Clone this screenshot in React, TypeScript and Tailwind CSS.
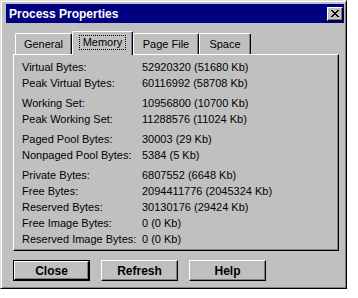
const rowGroups: [string, string][][] = [
  [
    ["Virtual Bytes:", "52920320 (51680 Kb)"],
    ["Peak Virtual Bytes:", "60116992 (58708 Kb)"],
  ],
  [
    ["Working Set:", "10956800 (10700 Kb)"],
    ["Peak Working Set:", "11288576 (11024 Kb)"],
  ],
  [
    ["Paged Pool Bytes:", "30003 (29 Kb)"],
    ["Nonpaged Pool Bytes:", "5384 (5 Kb)"],
  ],
  [
    ["Private Bytes:", "6807552 (6648 Kb)"],
    ["Free Bytes:", "2094411776 (2045324 Kb)"],
    ["Reserved Bytes:", "30130176 (29424 Kb)"],
    ["Free Image Bytes:", "0 (0 Kb)"],
    ["Reserved Image Bytes:", "0 (0 Kb)"],
  ],
];

const tabs = [
  { label: "General", width: "w-[57px]" },
  { label: "Memory", width: "w-[61px]", active: true },
  { label: "Page File", width: "w-[66px]" },
  { label: "Space", width: "w-[52px]" },
];

function CloseGlyph() {
  // 8x7 pixel cross, like the classic caption button
  const px: [number, number][] = [
    [0, 0], [1, 0], [6, 0], [7, 0],
    [1, 1], [2, 1], [5, 1], [6, 1],
    [2, 2], [3, 2], [4, 2], [5, 2],
    [3, 3], [4, 3],
    [2, 4], [3, 4], [4, 4], [5, 4],
    [1, 5], [2, 5], [5, 5], [6, 5],
    [0, 6], [1, 6], [6, 6], [7, 6],
  ];
  return (
    <svg width="8" height="7" viewBox="0 0 8 7" shapeRendering="crispEdges">
      {px.map(([x, y]) => (
        <rect key={`${x}-${y}`} x={x} y={y} width="1" height="1" fill="#000" />
      ))}
    </svg>
  );
}

function PushButton({ label, isDefault }: { label: string; isDefault?: boolean }) {
  return (
    <div
      className={
        isDefault
          ? "h-[21px] w-[77px] border border-black"
          : "h-[21px] w-[77px]"
      }
    >
      <div className="flex h-full w-full items-center justify-center border-t border-l border-t-white border-l-white border-r border-b border-r-black border-b-black bg-[#c0c0c0] text-[12px] font-bold text-black shadow-[inset_-1px_-1px_0_#808080]">
        {label}
      </div>
    </div>
  );
}

export default function App() {
  return (
    <div className="h-[298px] w-[358px] bg-white font-['Liberation_Sans',Arial,sans-serif]">
      <div className="flex h-[289px] w-[347px] flex-col border border-t-[#dfdfdf] border-l-[#dfdfdf] border-r-black border-b-black bg-[#c0c0c0] pl-[5px] pt-[3px] shadow-[inset_1px_1px_0_#fff,inset_-1px_-1px_0_#808080]">
        {/* caption */}
        <div className="flex h-[19px] w-[338px] items-center justify-between bg-[#000080] pl-[3px] pr-[1px]">
          <span className="text-[12px] leading-none font-bold text-white">
            Process Properties
          </span>
          <div className="flex h-[14px] w-[16px] items-center justify-center border-t border-l border-t-white border-l-white border-r border-b border-r-black border-b-black bg-[#c0c0c0] shadow-[inset_-1px_-1px_0_#808080]">
            <CloseGlyph />
          </div>
        </div>

        {/* tabs */}
        <div className="ml-[7px] mt-[8px] flex h-[23px] items-end pl-[2px]">
          {tabs.map((t) =>
            t.active ? (
              <div
                key={t.label}
                className={`${t.width} relative z-10 -mb-px flex h-[24px] items-center justify-center rounded-t-[2px] border-t border-l border-r border-t-white border-l-white border-r-black bg-[#c0c0c0] pb-[2px] shadow-[inset_-1px_0_0_#808080]`}
              >
                <span className="border border-dotted border-black px-[3px] text-[11px] leading-[13px] text-black">
                  {t.label}
                </span>
              </div>
            ) : (
              <div
                key={t.label}
                className={`${t.width} flex h-[21px] items-center justify-center rounded-t-[2px] border-t border-l border-r border-t-white border-l-white border-r-black bg-[#c0c0c0] shadow-[inset_-1px_0_0_#808080]`}
              >
                <span className="text-[11px] leading-none text-black">{t.label}</span>
              </div>
            )
          )}
        </div>

        {/* page */}
        <div className="ml-[7px] flex h-[197px] w-[326px] flex-col gap-[4px] border border-t-white border-l-white border-r-black border-b-black pl-[8px] pt-[4px] shadow-[inset_-1px_-1px_0_#808080]">
          {rowGroups.map((group, gi) => (
            <div key={gi} className="flex flex-col">
              {group.map(([label, value]) => (
                <div key={label} className="flex h-[16px] items-center text-[11px] text-black">
                  <span className="w-[120px]">{label}</span>
                  <span>{value}</span>
                </div>
              ))}
            </div>
          ))}
        </div>

        {/* buttons */}
        <div className="ml-[7px] mt-[9px] flex gap-[11px]">
          <PushButton label="Close" isDefault />
          <PushButton label="Refresh" />
          <PushButton label="Help" />
        </div>
      </div>
    </div>
  );
}
